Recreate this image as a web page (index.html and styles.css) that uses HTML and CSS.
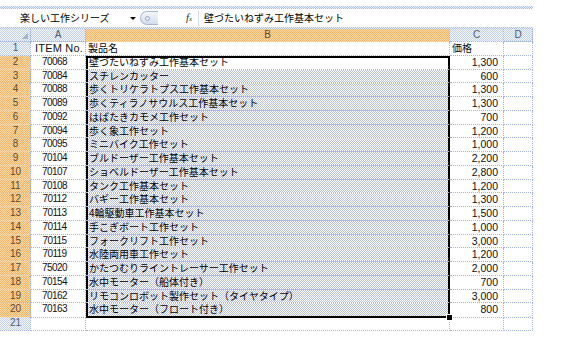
FILE: index.html
```html
<!DOCTYPE html>
<html lang="ja">
<head>
<meta charset="utf-8">
<link rel="stylesheet" href="styles.css">
</head>
<body>
<div class="app">
  <div class="band band-top"></div>
  <div class="fbar">
    <div class="namebox">楽しい工作シリーズ</div>
    <div class="nb-arrow"></div>
    <div class="grip"><span class="grip-dot"></span></div>
    <div class="fx">f<span class="fx-x">x</span></div>
    <div class="formula">壁づたいねずみ工作基本セット</div>
  </div>
  <div class="band band-mid"></div>
  <div class="sheet">
    <div class="row head-row">
      <div class="corner"><span class="corner-tri"></span></div>
      <div class="colhead">A</div>
      <div class="colhead sel">B</div>
      <div class="colhead">C</div>
      <div class="colhead">D</div>
    </div>
    <div class="row"><div class="rowhead">1</div><div class="cell a left">ITEM No.</div><div class="cell b">製品名</div><div class="cell c left">価格</div><div class="cell d"></div></div>
    <div class="row"><div class="rowhead sel">2</div><div class="cell a">70068</div><div class="cell b range first active">壁づたいねずみ工作基本セット</div><div class="cell c">1,300</div><div class="cell d"></div></div>
    <div class="row"><div class="rowhead sel">3</div><div class="cell a">70084</div><div class="cell b range">スチレンカッター</div><div class="cell c">600</div><div class="cell d"></div></div>
    <div class="row"><div class="rowhead sel">4</div><div class="cell a">70088</div><div class="cell b range">歩くトリケラトプス工作基本セット</div><div class="cell c">1,300</div><div class="cell d"></div></div>
    <div class="row"><div class="rowhead sel">5</div><div class="cell a">70089</div><div class="cell b range">歩くティラノサウルス工作基本セット</div><div class="cell c">1,300</div><div class="cell d"></div></div>
    <div class="row"><div class="rowhead sel">6</div><div class="cell a">70092</div><div class="cell b range">はばたきカモメ工作セット</div><div class="cell c">700</div><div class="cell d"></div></div>
    <div class="row"><div class="rowhead sel">7</div><div class="cell a">70094</div><div class="cell b range">歩く象工作セット</div><div class="cell c">1,200</div><div class="cell d"></div></div>
    <div class="row"><div class="rowhead sel">8</div><div class="cell a">70095</div><div class="cell b range">ミニバイク工作セット</div><div class="cell c">1,000</div><div class="cell d"></div></div>
    <div class="row"><div class="rowhead sel">9</div><div class="cell a">70104</div><div class="cell b range">ブルドーザー工作基本セット</div><div class="cell c">2,200</div><div class="cell d"></div></div>
    <div class="row"><div class="rowhead sel">10</div><div class="cell a">70107</div><div class="cell b range">ショベルドーザー工作基本セット</div><div class="cell c">2,800</div><div class="cell d"></div></div>
    <div class="row"><div class="rowhead sel">11</div><div class="cell a">70108</div><div class="cell b range">タンク工作基本セット</div><div class="cell c">1,200</div><div class="cell d"></div></div>
    <div class="row"><div class="rowhead sel">12</div><div class="cell a">70112</div><div class="cell b range">バギー工作基本セット</div><div class="cell c">1,300</div><div class="cell d"></div></div>
    <div class="row"><div class="rowhead sel">13</div><div class="cell a">70113</div><div class="cell b range">4輪駆動車工作基本セット</div><div class="cell c">1,500</div><div class="cell d"></div></div>
    <div class="row"><div class="rowhead sel">14</div><div class="cell a">70114</div><div class="cell b range">手こぎボート工作セット</div><div class="cell c">1,000</div><div class="cell d"></div></div>
    <div class="row"><div class="rowhead sel">15</div><div class="cell a">70115</div><div class="cell b range">フォークリフト工作セット</div><div class="cell c">3,000</div><div class="cell d"></div></div>
    <div class="row"><div class="rowhead sel">16</div><div class="cell a">70119</div><div class="cell b range">水陸両用車工作セット</div><div class="cell c">1,200</div><div class="cell d"></div></div>
    <div class="row"><div class="rowhead sel">17</div><div class="cell a">75020</div><div class="cell b range">かたつむりライントレーサー工作セット</div><div class="cell c">2,000</div><div class="cell d"></div></div>
    <div class="row"><div class="rowhead sel">18</div><div class="cell a">70154</div><div class="cell b range">水中モーター（船体付き）</div><div class="cell c">700</div><div class="cell d"></div></div>
    <div class="row"><div class="rowhead sel">19</div><div class="cell a">70162</div><div class="cell b range">リモコンロボット製作セット（タイヤタイプ）</div><div class="cell c">3,000</div><div class="cell d"></div></div>
    <div class="row"><div class="rowhead sel">20</div><div class="cell a">70163</div><div class="cell b range last">水中モーター（フロート付き）</div><div class="cell c">800</div><div class="cell d"></div></div>
    <div class="row"><div class="rowhead">21</div><div class="cell a"></div><div class="cell b"></div><div class="cell c"></div><div class="cell d"></div></div>
  </div>
</div>
</body>
</html>
```
FILE: styles.css
```css
* { box-sizing: border-box; }
html, body { margin: 0; padding: 0; background: #fff; }
body {
  font-family: "Noto Sans CJK JP", "Noto Sans", sans-serif;
  color: #000;
}
.app { width: 567px; height: 340px; overflow: hidden; }

.band {
  width: 533px;
  background: repeating-conic-gradient(#a9bde2 0 25%, #eef2fa 0 50%) 0 0 / 2px 2px;
}
.band-top { margin-top: 6px; height: 3px; }
.band-mid { height: 2px; }

.fbar {
  display: flex;
  align-items: center;
  width: 533px;
  height: 18px;
  background: #fff;
}
.namebox {
  width: 130px;
  padding-left: 20px;
  font-size: 10px;
  line-height: 18px;
  white-space: nowrap;
}
.nb-arrow {
  width: 0; height: 0;
  margin-right: 4px;
  border-left: 3px solid transparent;
  border-right: 3px solid transparent;
  border-top: 3px solid #000;
}
.grip {
  display: flex;
  align-items: center;
  width: 18px;
  height: 14px;
  padding-left: 4px;
  border: 1px solid #a8b8d4;
  border-right: none;
  border-radius: 7px 0 0 7px;
  background: linear-gradient(#f4f7fb, #d3ddeb);
}
.grip-dot {
  width: 5px; height: 5px;
  border: 1px solid #97a6c0;
  border-radius: 50%;
  background: #e9eef6;
}
.fx {
  margin-left: 28px;
  width: 13px;
  padding-right: 2px;
  border-right: 1px solid #d6dde9;
  font-family: "Liberation Serif", serif;
  font-style: italic;
  font-size: 11px;
  line-height: 14px;
  color: #333;
}
.fx-x { font-size: 7px; }
.formula {
  padding-left: 5px;
  font-size: 10px;
  line-height: 18px;
  white-space: nowrap;
}

.sheet { width: 533px; }
.row {
  display: grid;
  grid-template-columns: 31px 55px 364px 54px 29px;
  height: 13.75px;
}
.head-row { height: 13px; }

.corner, .colhead, .rowhead {
  background: repeating-conic-gradient(#c3d2ea 0 25%, #f3f6fb 0 50%) 0 0 / 2px 2px;
  color: #4d5a73;
  border-right: 1px dotted #9fb1d8;
  border-bottom: 1px dotted #9fb1d8;
}
.corner {
  display: flex;
  justify-content: flex-end;
  align-items: flex-end;
  padding: 0 2px 2px 0;
}
.corner-tri {
  width: 7px; height: 6px;
  background: linear-gradient(135deg, transparent 50%, #a6b4cc 50%);
}
.colhead {
  font-family: "Liberation Sans", sans-serif;
  font-size: 10px;
  line-height: 12px;
  text-align: center;
}
.colhead.sel, .rowhead.sel {
  background: repeating-conic-gradient(#f5b466 0 25%, #fcd9a8 0 50%) 0 0 / 2px 2px;
  color: #5a4a33;
  border-bottom-color: #f0c89a;
}
.rowhead {
  font-family: "Liberation Sans", sans-serif;
  font-size: 10px;
  line-height: 12.75px;
  text-align: center;
  padding-left: 1px;
}

.cell {
  border-right: 1px dotted #a3b3dc;
  border-bottom: 1px dotted #a3b3dc;
  white-space: nowrap;
  overflow: visible;
  line-height: 12.75px;
}
.cell.a {
  font-family: "Liberation Sans", sans-serif;
  font-size: 10px;
  letter-spacing: -0.6px;
  text-align: center;
  padding-right: 7px;
  color: #111;
}
.cell.a.left {
  text-align: left;
  padding-left: 4px;
  padding-right: 0;
  font-size: 11px;
  letter-spacing: 0.2px;
}
.cell.b {
  font-size: 10px;
  padding-left: 2px;
}
.cell.c {
  font-family: "Liberation Sans", sans-serif;
  font-size: 10.5px;
  text-align: right;
  padding-right: 5px;
  color: #111;
}
.cell.c.left {
  font-family: "Noto Sans CJK JP", sans-serif;
  font-size: 10px;
  text-align: left;
  padding-left: 2px;
}

.cell.range {
  background: repeating-conic-gradient(#b8bfe6 0 25%, #ffffff 0 50%) 0 0 / 2px 2px;
  border-right: 2px solid #000;
  box-shadow: inset 2px 0 0 #000;
  padding-left: 3px;
}
.cell.range.first {
  background: #fff;
  box-shadow: inset 2px 0 0 #000, inset 0 2px 0 #000;
}
.cell.range.last {
  position: relative;
  border-bottom: 2px solid #000;
}
.cell.range.last::after {
  content: "";
  position: absolute;
  right: -4px;
  bottom: -4px;
  width: 5px;
  height: 5px;
  background: #000;
  outline: 1px solid #fff;
}
```
